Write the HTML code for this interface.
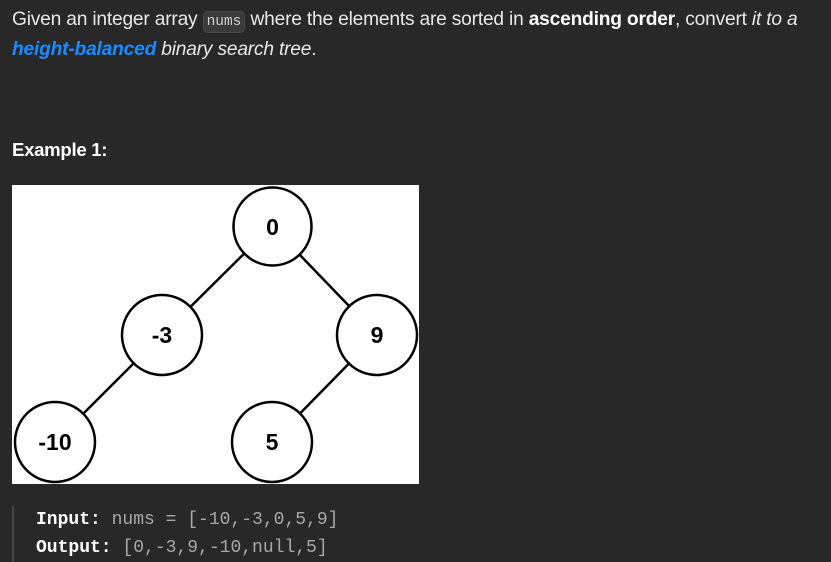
<!DOCTYPE html>
<html><head><style>
body{margin:0;background:#282828;width:831px;height:562px;overflow:hidden;font-family:"Liberation Sans",sans-serif;color:#eff1f6}
.p{position:absolute;left:12px;top:6px;font-size:19.2px;line-height:28px;width:830px;white-space:nowrap;color:#e8e8e8;letter-spacing:-0.2px}
code{font-family:"Liberation Mono",monospace;font-size:14.5px;background:#3a3a3a;border:1px solid #4a4a4a;border-radius:5px;padding:2px 3px;color:#cfcfcf;letter-spacing:0}
.hb{color:#1a8cff;font-weight:bold;font-style:italic}
.ex{position:absolute;left:12px;top:139px;font-size:18.6px;font-weight:bold;color:#fff;letter-spacing:-0.3px}
svg{position:absolute;left:12px;top:185px}
.pre{position:absolute;left:12px;top:506px;border-left:2px solid #444;height:56px;padding-left:22px;font-family:"Liberation Mono",monospace;font-size:18px;line-height:28px;color:#a8a8a8}
.pre b{color:#fff}
</style></head><body>
<div class="p">Given an integer array <code>nums</code> where the elements are sorted in <b style="color:#fff">ascending order</b>, convert <i>it to a</i><br><span class="hb">height-balanced</span> <i>binary search tree</i>.</div>
<div class="ex">Example 1:</div>
<svg width="407" height="299" viewBox="0 0 407 299">
<rect width="407" height="299" fill="#fff"/>
<g stroke="#000" stroke-width="2.5" fill="#fff">
<line x1="260" y1="41" x2="150" y2="150"/>
<line x1="260" y1="41" x2="365" y2="150"/>
<line x1="150" y1="150" x2="43" y2="257"/>
<line x1="365" y1="150" x2="260" y2="257"/>
<circle cx="260.5" cy="41.5" r="39"/>
<circle cx="150" cy="150" r="40"/>
<circle cx="365" cy="150" r="40"/>
<circle cx="43" cy="257" r="40"/>
<circle cx="260" cy="257" r="40"/>
</g>
<g font-family="Liberation Sans,sans-serif" font-weight="bold" font-size="23" text-anchor="middle" fill="#000">
<text x="260.5" y="50">0</text>
<text x="150" y="158">-3</text>
<text x="365" y="158">9</text>
<text x="43" y="265">-10</text>
<text x="260" y="265">5</text>
</g>
</svg>
<div class="pre"><b>Input:</b> nums = [-10,-3,0,5,9]<br><b>Output:</b> [0,-3,9,-10,null,5]</div>
</body></html>
